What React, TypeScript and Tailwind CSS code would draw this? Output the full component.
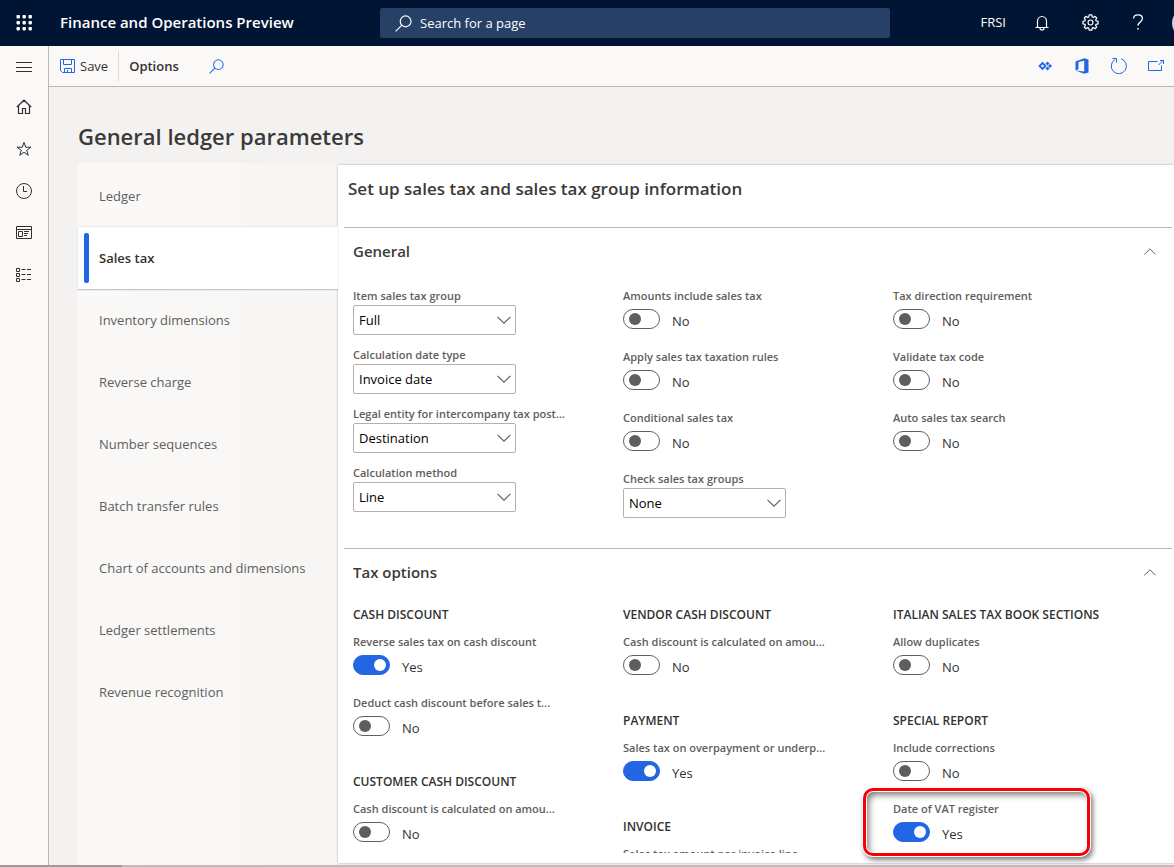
import { useId, useState } from "react";
import type { ReactNode } from "react";

type IconProps = { children: ReactNode; className?: string; size?: number };

function Icon({ children, className = "", size = 16 }: IconProps) {
  return (
    <svg
      width={size}
      height={size}
      viewBox={`0 0 ${size} ${size}`}
      fill="none"
      stroke="currentColor"
      strokeWidth="1"
      className={`shrink-0 ${className}`}
      aria-hidden="true"
    >
      {children}
    </svg>
  );
}

function Waffle() {
  return (
    <svg width="16" height="16" viewBox="0 0 16 16" fill="white" aria-hidden="true">
      {[0, 6, 12].map((y) =>
        [0, 6, 12].map((x) => <rect key={`${x}-${y}`} x={x + 0.5} y={y} width="3.400" height="3.400" rx="0.8" />)
      )}
    </svg>
  );
}

function SearchIcon({ size, className }: { size: number; className?: string }) {
  return (
    <svg
      width={size}
      height={size}
      viewBox="0 0 16 16"
      fill="none"
      stroke="currentColor"
      strokeWidth="1.1"
      className={`shrink-0 ${className ?? ""}`}
      aria-hidden="true"
    >
      <circle cx="10" cy="6" r="5.1" />
      <path d="M6.3 9.7L0.6 15.4" />
    </svg>
  );
}

function GearIcon() {
  return (
    <Icon size={18} className="h-[17px] w-[17px]">
      <circle cx="9" cy="9" r="2.6" strokeWidth="1.2" />
      <path
        strokeWidth="1.3"
        strokeLinejoin="round"
        d="M7.6 1h2.8l.5 2.2 1 .5 2-1.2 1.7 1.7-1.1 2 .4 1L17 7.7v2.7l-2.200.5-.4 1 1.100 2-1.700 1.700-2-1.200-1 .5-.4 2.100H7.6l-.5-2.100-1-.5-2 1.200-1.700-1.700 1.200-2-.5-1L1 10.4V7.7l2.100-.5.5-1-1.200-2 1.700-1.700 2 1.200 1-.5z"
      />
    </Icon>
  );
}

function HeaderBar() {
  return (
    <header className="flex h-[46px] shrink-0 items-center overflow-hidden bg-[#001433] text-white">
      <div className="flex w-[380px] shrink-0 items-center">
        <button aria-label="App launcher" className="flex h-[46px] w-12 items-center justify-center">
          <Waffle />
        </button>
        <span className="pb-[2px] pl-3 text-[15px] font-semibold whitespace-nowrap">
          Finance and Operations Preview
        </span>
      </div>
      <label className="flex h-[30px] w-[510px] items-center gap-2 rounded-xs bg-[#274066] pl-[15px]">
        <SearchIcon size={17} />
        <input
          aria-label="Search for a page"
          placeholder="Search for a page"
          className="min-w-0 flex-1 bg-transparent pt-[2px] text-[13px] text-white outline-none placeholder:text-white"
        />
      </label>
      <div className="ml-auto -mr-[30px] flex shrink-0 items-center">
        <button className="px-3 text-[13px]">FRSI</button>
        <button aria-label="Notifications" className="flex h-[46px] w-12 items-center justify-center">
          <Icon>
            <path strokeWidth="1.2" d="M3.500 12V6.200a4.500 4.700 0 0 1 9 0V12M1.500 12.500h13" />
            <path strokeWidth="1.2" d="M6 13a2 2 0 0 0 4 0" />
          </Icon>
        </button>
        <button aria-label="Settings" className="flex h-[46px] w-12 items-center justify-center pb-[2px]">
          <GearIcon />
        </button>
        <button aria-label="Help" className="flex h-[46px] w-12 items-center justify-center pb-[2px]">
          <Icon>
            <path strokeWidth="1.3" d="M3.600 4.600C3.600 2 5.300.8 7.900.8s4.500 1.300 4.500 3.600c0 3.400-4.400 3.600-4.400 7.200" />
            <path strokeWidth="1.5" d="M8 14v1.600" />
          </Icon>
        </button>
        <button aria-label="Account" className="ml-[10px] h-8 w-8 rounded-full bg-[#c7d3f2]" />
      </div>
    </header>
  );
}

const navItems: { label: string; icon: ReactNode }[] = [
  {
    label: "Home",
    icon: (
      <Icon>
        <path strokeWidth="1.2" d="M.8 8L8 1.200 15.200 8M2.500 6.600v7.900h4V9.500h3v5h4V6.600" />
      </Icon>
    ),
  },
  {
    label: "Favorites",
    icon: (
      <Icon>
        <path d="M8 1.300l1.700 4.900h5.200l-4.200 3.100 1.600 5L8 11.300l-4.300 3 1.600-5L1.100 6.200h5.200z" />
      </Icon>
    ),
  },
  {
    label: "Recent",
    icon: (
      <Icon>
        <circle cx="8" cy="8" r="7.5" />
        <path d="M7.500 3v5.500H11" />
      </Icon>
    ),
  },
  {
    label: "Workspaces",
    icon: (
      <Icon>
        <path d="M.5 1.500h15v12H.5zM.5 4.500h15M2.500 6.500h4v5h-4zM8 6.500h5M8 8.500h4M8 10.500h3" />
      </Icon>
    ),
  },
  {
    label: "Modules",
    icon: (
      <Icon>
        <path d="M.5 1.500h3v3h-3zM.5 6.500h3v3h-3zM.5 11.500h3v3h-3z" />
        <path d="M5.500 2.500h4M11 2.500h4M5.500 7.500h4M11 7.500h4M5.500 12.500h4M11 12.500h4" />
      </Icon>
    ),
  },
];

function SideNav() {
  return (
    <nav className="flex w-[49px] shrink-0 flex-col border-r border-[#b9b8b7] bg-[#faf9f8] text-[#323130]">
      <button aria-label="Expand navigation" className="flex h-10 items-center justify-center pt-[2px]">
        <Icon>
          <path d="M0 3.500h16M0 8.500h16M0 12.500h16" />
        </Icon>
      </button>
      {navItems.map((item) => (
        <button key={item.label} aria-label={item.label} className="flex h-[42px] items-center justify-center">
          {item.icon}
        </button>
      ))}
    </nav>
  );
}

function ActionBar() {
  return (
    <div className="flex h-[41px] shrink-0 items-center border-b border-[#b9b8b7] bg-[#faf9f8] text-[#323130]">
      <button className="flex items-center gap-1 pr-[10px] pl-[11px] text-[13px]">
        <Icon className="text-[#2266e3]">
          <path d="M.5 1.500h14v13h-12l-2-2zM3.500 1.500v5h8v-5M4.500 14.500v-4h7v4M7.500 12v2.500" />
        </Icon>
        <span className="pt-[2px]">Save</span>
      </button>
      <div className="h-[30px] w-px bg-[#dddbd9]" />
      <button className="px-[10px] pt-[2px] text-[13px] font-semibold">Options</button>
      <button aria-label="Search actions" className="ml-5 text-[#2266e3]">
        <SearchIcon size={15} />
      </button>
      <div className="ml-auto flex items-center text-[#2266e3]">
        <button aria-label="Power Apps" className="flex w-[37px] justify-center">
          <Icon>
            <path strokeWidth="1.8" d="M5.500 5L8.500 8 5.500 11 2.500 8z" />
            <path fill="currentColor" stroke="none" d="M10.500 3.600l2 2-2 2-2-2zM10.500 8.400l2 2-2 2-2-2zM13 6l2 2-2 2-2-2z" />
          </Icon>
        </button>
        <button aria-label="Open in Office" className="flex w-[37px] justify-center">
          <Icon>
            <path
              fill="currentColor"
              stroke="none"
              d="M1.500 3.600L10.200.3l4.300 1.200v13l-4.300 1.200-8.700-3.200 8.700 1.100V2.800L4.500 4.100v7.100l-3 1.300z"
            />
          </Icon>
        </button>
        <button aria-label="Refresh" className="flex w-[37px] justify-center">
          <Icon size={18}>
            <path d="M11 1.800a7.600 7.600 0 1 1-5.800.6M2.500 1.500h4v4" />
          </Icon>
        </button>
        <button aria-label="Open in new window" className="flex w-[37px] justify-center">
          <Icon>
            <path d="M9.500 3.500h-9v9h13V7.500M10.500 7l5-5M12 2.500h3.500V6" />
          </Icon>
        </button>
      </div>
    </div>
  );
}

const tabs = [
  "Ledger",
  "Sales tax",
  "Inventory dimensions",
  "Reverse charge",
  "Number sequences",
  "Batch transfer rules",
  "Chart of accounts and dimensions",
  "Ledger settlements",
  "Revenue recognition",
];

function TabList() {
  const [active, setActive] = useState("Sales tax");
  return (
    <div
      role="tablist"
      aria-orientation="vertical"
      className="flex w-[260px] shrink-0 flex-col bg-linear-to-r from-[#faf9f8] to-[#f7f6f5] pt-[2px] text-[13px]"
    >
      {tabs.map((tab) =>
        tab === active ? (
          <button
            key={tab}
            role="tab"
            aria-selected="true"
            className="z-10 flex h-[62px] items-center bg-white pl-[6px] text-left font-semibold text-[#323130] shadow-[0_1px_1px_#c4c3c2,0_-1px_1px_#eceaea]"
          >
            <span className="mr-[10px] h-[50px] w-[5px] rounded-xs bg-[#2266e3]" />
            <span className="pt-[2px]">{tab}</span>
          </button>
        ) : (
          <button
            key={tab}
            role="tab"
            aria-selected="false"
            onClick={() => setActive(tab)}
            className="flex h-[62px] items-center pt-[2px] pl-[21px] text-left text-[#605e5c]"
          >
            {tab}
          </button>
        )
      )}
    </div>
  );
}

function FieldLabel({ htmlFor, children }: { htmlFor: string; children: ReactNode }) {
  return (
    <label
      htmlFor={htmlFor}
      className="block pb-[2px] text-[11px] leading-[15px] font-semibold whitespace-nowrap text-[#605e5c]"
    >
      {children}
    </label>
  );
}

function SelectField({ label, options }: { label: string; options: string[] }) {
  const id = useId();
  return (
    <div className="pb-3">
      <FieldLabel htmlFor={id}>{label}</FieldLabel>
      <div className="relative w-[163px]">
        <select
          id={id}
          className="block h-[30px] w-full appearance-none rounded-xs border border-[#b3b0ad] bg-white pt-[2px] pl-[5px] text-[13px] text-black"
        >
          {options.map((option) => (
            <option key={option}>{option}</option>
          ))}
        </select>
        <svg
          width="14"
          height="8"
          viewBox="0 0 14 8"
          fill="none"
          stroke="#605e5c"
          strokeWidth="1.1"
          className="pointer-events-none absolute top-[11px] right-[5px]"
          aria-hidden="true"
        >
          <path d="M.5.8L7 7.200 13.500.8" />
        </svg>
      </div>
    </div>
  );
}

function ToggleField({ label, on = false }: { label: string; on?: boolean }) {
  const id = useId();
  const [checked, setChecked] = useState(on);
  return (
    <div className="pb-5">
      <FieldLabel htmlFor={id}>{label}</FieldLabel>
      <div className="flex h-6 items-end gap-3 text-[#323130]">
        <input
          id={id}
          type="checkbox"
          role="switch"
          checked={checked}
          onChange={(event) => setChecked(event.target.checked)}
          className="flex h-5 w-[37px] appearance-none items-center rounded-full border border-[#605e5c] bg-white px-[5px] before:h-3 before:w-3 before:rounded-full before:bg-[#605e5c] checked:justify-end checked:border-[#2266e3] checked:bg-[#2266e3] checked:px-[3px] checked:before:bg-white"
        />
        <span className="text-[13px] leading-4">{checked ? "Yes" : "No"}</span>
      </div>
    </div>
  );
}

function Section({ title, children }: { title: string; children: ReactNode }) {
  const [open, setOpen] = useState(true);
  return (
    <section className="mr-[2px] ml-[6px] border-t border-[#b9b8b7] pb-[18px] pl-[9px]">
      <h3>
        <button
          aria-expanded={open}
          onClick={() => setOpen(!open)}
          className="flex h-[46px] w-full items-center justify-between pr-4 text-[15px] font-semibold text-[#3b3a39]"
        >
          {title}
          <svg width="12" height="7" viewBox="0 0 12 7" fill="none" stroke="#605e5c" aria-hidden="true">
            <path d="M.4 6.400L6 .8l5.600 5.600" />
          </svg>
        </button>
      </h3>
      {open && <div className="grid grid-cols-[repeat(auto-fill,270px)] pt-[14px]">{children}</div>}
    </section>
  );
}

function Group({ title, children }: { title: string; children: ReactNode }) {
  return (
    <div>
      <h4 className="pb-[13px] text-[12px] leading-3 font-semibold whitespace-nowrap text-[#323130]">{title}</h4>
      {children}
    </div>
  );
}

function SalesTaxPanel() {
  return (
    <div
      role="tabpanel"
      className="relative mt-[2px] mb-[2px] flex min-h-0 min-w-0 flex-1 flex-col bg-white pb-[10px] shadow-[0_0_2px_#a9a8a7]"
    >
      <h2 className="flex h-[62px] shrink-0 items-center pb-[14px] pl-[10px] text-[17px] font-semibold text-[#3b3a39]">
        Set up sales tax and sales tax group information
      </h2>
      <div className="min-h-0 flex-1 overflow-hidden">
        <Section title="General">
          <div>
            <SelectField label="Item sales tax group" options={["Full", "None"]} />
            <SelectField label="Calculation date type" options={["Invoice date", "Delivery date"]} />
            <SelectField label="Legal entity for intercompany tax post..." options={["Destination", "Source"]} />
            <SelectField label="Calculation method" options={["Line", "Total"]} />
          </div>
          <div>
            <ToggleField label="Amounts include sales tax" />
            <ToggleField label="Apply sales tax taxation rules" />
            <ToggleField label="Conditional sales tax" />
            <SelectField label="Check sales tax groups" options={["None", "Warning"]} />
          </div>
          <div>
            <ToggleField label="Tax direction requirement" />
            <ToggleField label="Validate tax code" />
            <ToggleField label="Auto sales tax search" />
          </div>
        </Section>
        <Section title="Tax options">
          <div className="flex flex-col gap-5">
            <Group title="CASH DISCOUNT">
              <ToggleField label="Reverse sales tax on cash discount" on />
              <ToggleField label="Deduct cash discount before sales t..." />
            </Group>
            <Group title="CUSTOMER CASH DISCOUNT">
              <ToggleField label="Cash discount is calculated on amou..." />
            </Group>
          </div>
          <div className="flex flex-col gap-5">
            <Group title="VENDOR CASH DISCOUNT">
              <ToggleField label="Cash discount is calculated on amou..." />
            </Group>
            <Group title="PAYMENT">
              <ToggleField label="Sales tax on overpayment or underp..." on />
            </Group>
            <Group title="INVOICE">
              <ToggleField label="Sales tax amount per invoice line" />
            </Group>
          </div>
          <div className="flex flex-col gap-5">
            <Group title="ITALIAN SALES TAX BOOK SECTIONS">
              <ToggleField label="Allow duplicates" />
            </Group>
            <Group title="SPECIAL REPORT">
              <ToggleField label="Include corrections" />
              <ToggleField label="Date of VAT register" on />
            </Group>
          </div>
        </Section>
      </div>
      <div className="pointer-events-none absolute top-[623px] left-[525px] h-[68px] w-[227px] rounded-[10px] border-3 border-[#f80000] shadow-[0_0_0_1px_#ffffff,2px_3px_5px_1px_#00000080,inset_0_0_0_1px_#ffffff,inset_3px_4px_6px_#00000080]" />
    </div>
  );
}

export default function App() {
  return (
    <div className="flex h-screen flex-col overflow-hidden bg-[#f3f2f1] font-['Open_Sans','Noto_Sans',sans-serif]">
      <HeaderBar />
      <div className="flex min-h-0 flex-1">
        <SideNav />
        <div className="flex min-w-0 flex-1 flex-col">
          <ActionBar />
          <main className="flex min-h-0 flex-1 flex-col pl-[29px]">
            <h1 className="flex h-[76px] shrink-0 items-center pt-[22px] text-[22px] font-semibold text-[#3b3a39]">
              General ledger parameters
            </h1>
            <div className="flex min-h-0 flex-1">
              <TabList />
              <SalesTaxPanel />
            </div>
          </main>
        </div>
      </div>
      <div className="flex h-[2px] shrink-0 bg-[#bdbdbd]">
        <div className="w-[122px] bg-[#9b9b9b]" />
      </div>
    </div>
  );
}
